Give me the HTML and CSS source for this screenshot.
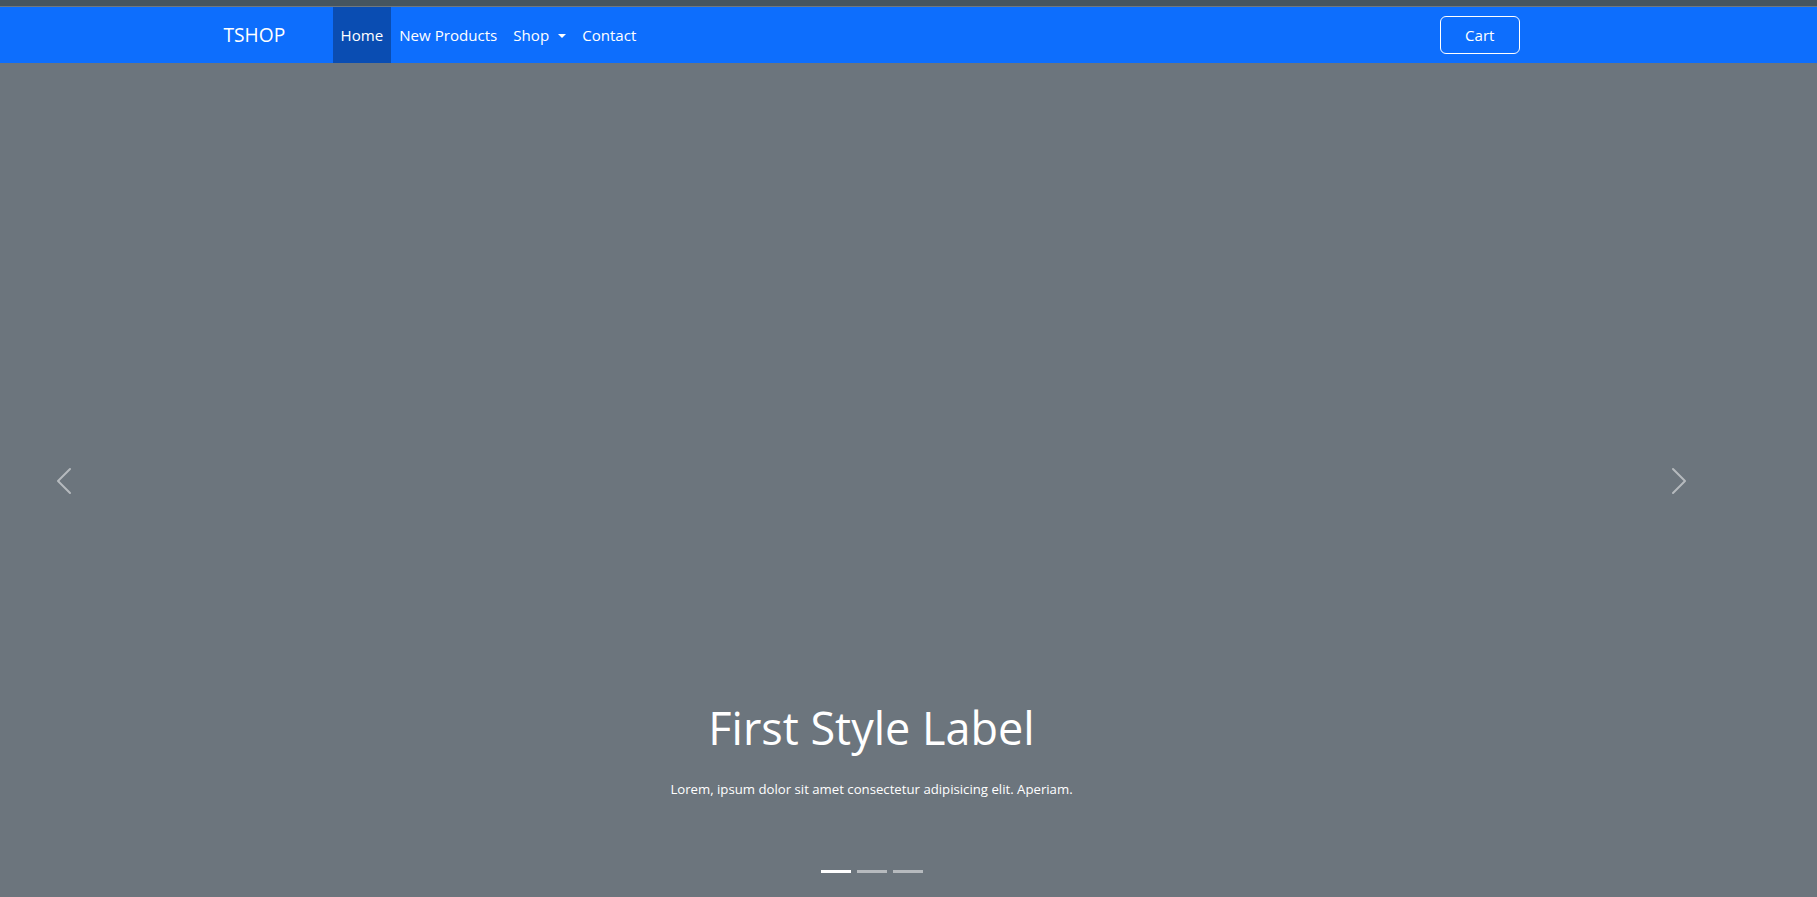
FILE: index.html
```html
<!DOCTYPE html>
<html lang="en">
<head>
<meta charset="utf-8">
<title>TSHOP</title>
<link rel="stylesheet" href="styles.css">
</head>
<body>
<div class="page">
  <div class="topbar"></div>
  <header class="navbar">
    <div class="navbar-frame">
      <div class="container">
        <a class="brand" href="#">TSHOP</a>
        <ul class="nav">
          <li><a class="nav-link active" href="#">Home</a></li>
          <li><a class="nav-link" href="#">New Products</a></li>
          <li><a class="nav-link dropdown-toggle" href="#">Shop</a></li>
          <li><a class="nav-link" href="#">Contact</a></li>
        </ul>
        <a class="btn-cart" href="#">Cart</a>
      </div>
    </div>
  </header>
  <section class="carousel">
    <button class="control control-prev" aria-label="Previous">
      <svg class="control-icon" viewBox="0 0 16 16" width="32" height="32"><path fill="#fff" d="M11.354 1.646a.5.5 0 0 1 0 .708L5.707 8l5.647 5.646a.5.5 0 0 1-.708.708l-6-6a.5.5 0 0 1 0-.708l6-6a.5.5 0 0 1 .708 0z"/></svg>
    </button>
    <div class="slide"></div>
    <button class="control control-next" aria-label="Next">
      <svg class="control-icon" viewBox="0 0 16 16" width="32" height="32"><path fill="#fff" d="M4.646 1.646a.5.5 0 0 1 .708 0l6 6a.5.5 0 0 1 0 .708l-6 6a.5.5 0 0 1-.708-.708L10.293 8 4.646 2.354a.5.5 0 0 1 0-.708z"/></svg>
    </button>
    <div class="caption">
      <h5 class="caption-title">First Style Label</h5>
      <p class="caption-text">Lorem, ipsum dolor sit amet consectetur adipisicing elit. Aperiam.</p>
    </div>
    <div class="indicators">
      <span class="indicator active"></span>
      <span class="indicator"></span>
      <span class="indicator"></span>
    </div>
  </section>
</div>
</body>
</html>
```
FILE: styles.css
```css
* { box-sizing: border-box; }

html, body {
  margin: 0;
  padding: 0;
}

body {
  background: #6c757d;
  font-family: "Open Sans", "Noto Sans", sans-serif;
  color: #fff;
}

.page {
  height: 100vh;
  overflow: hidden;
}

.topbar {
  height: 7px;
  background: #46555f;
  border-bottom: 1px solid #6f787f;
}

.navbar {
  background: #0d6efd;
  height: 56px;
}

.navbar-frame {
  width: 1743px;
  height: 100%;
  display: flex;
  justify-content: center;
}

.container {
  width: 1296px;
  display: flex;
  align-items: stretch;
}

.brand {
  width: 109px;
  display: flex;
  align-items: center;
  font-size: 19.2px;
  color: #fff;
  text-decoration: none;
  padding-bottom: 1px;
}

.nav {
  list-style: none;
  margin: 0;
  padding: 0;
  display: flex;
  align-items: stretch;
}

.nav li {
  display: flex;
}

.nav-link {
  display: flex;
  align-items: center;
  padding: 0 8px;
  font-size: 15.1px;
  color: #fff;
  text-decoration: none;
}

.nav-link.active {
  background: #0a4db2;
}

.dropdown-toggle::after {
  content: "";
  display: inline-block;
  margin-left: 9px;
  border-top: 4px solid #fff;
  border-left: 4px solid transparent;
  border-right: 4px solid transparent;
  margin-top: 1px;
}

.btn-cart {
  margin-left: auto;
  align-self: center;
  height: 38px;
  padding: 0 24px;
  display: flex;
  align-items: center;
  border: 1px solid #fff;
  border-radius: 6px;
  color: #fff;
  font-size: 15.1px;
  text-decoration: none;
}

.carousel {
  position: relative;
  width: 1743px;
  height: 836px;
  background: #6c757d;
  display: flex;
}

.slide {
  flex: 1;
}

.control {
  width: 128px;
  flex: none;
  border: 0;
  padding: 0;
  background: none;
  display: flex;
  align-items: center;
  justify-content: center;
  opacity: 0.5;
  cursor: pointer;
}

.control-icon {
  display: block;
}

.caption {
  position: absolute;
  left: 15%;
  right: 15%;
  bottom: 99px;
  text-align: center;
}

.caption-title {
  margin: 0 0 24px;
  font-size: 45px;
  font-weight: 400;
  line-height: 54px;
}

.caption-text {
  margin: 0;
  font-size: 13.2px;
  line-height: 21px;
}

.indicators {
  position: absolute;
  left: 0;
  right: 0;
  bottom: 26px;
  display: flex;
  justify-content: center;
  gap: 6px;
}

.indicator {
  width: 30px;
  height: 3px;
  background: #fff;
  opacity: 0.5;
}

.indicator.active {
  opacity: 1;
}
```
